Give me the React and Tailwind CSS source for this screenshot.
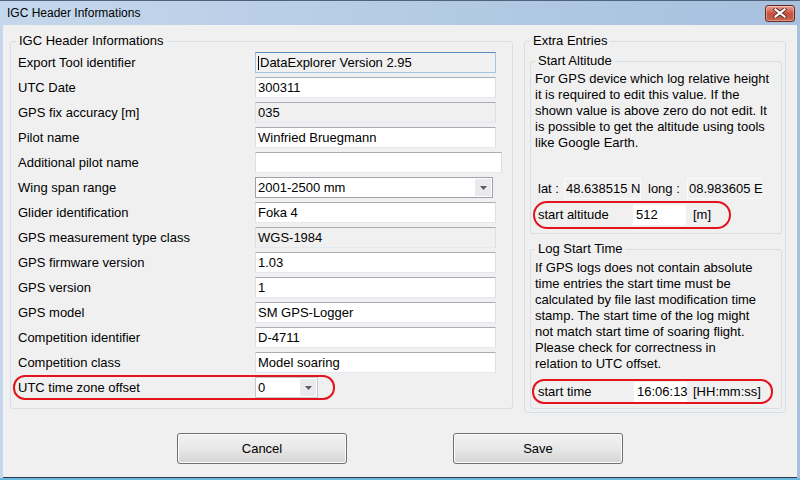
import React from 'react';

const rows = [
  { label: 'Export Tool identifier', value: 'DataExplorer Version 2.95', kind: 'focus' },
  { label: 'UTC Date', value: '300311' },
  { label: 'GPS fix accuracy [m]', value: '035', kind: 'readonly' },
  { label: 'Pilot name', value: 'Winfried Bruegmann' },
  { label: 'Additional pilot name', value: '', kind: 'wide' },
  { label: 'Wing span range', value: '2001-2500 mm', kind: 'combo' },
  { label: 'Glider identification', value: 'Foka 4' },
  { label: 'GPS measurement type class', value: 'WGS-1984', kind: 'readonly' },
  { label: 'GPS firmware version', value: '1.03' },
  { label: 'GPS version', value: '1' },
  { label: 'GPS model', value: 'SM GPS-Logger' },
  { label: 'Competition identifier', value: 'D-4711' },
  { label: 'Competition class', value: 'Model soaring' },
];

const altitudeText = [
  'For GPS device which log relative height',
  'it is required to edit this value. If the',
  'shown value is above zero do not edit. It',
  'is possible to get the altitude using tools',
  'like Google Earth.',
];

const startTimeText = [
  'If GPS logs does not contain absolute',
  'time entries the start time must be',
  'calculated by file last modification time',
  'stamp. The start time of the log might',
  'not match start time of soaring flight.',
  'Please check for correctness in',
  'relation to UTC offset.',
];

// windows 7 style text box
const TextField = ({ value, kind }) => {
  if (kind === 'focus') {
    return (
      <div className="flex h-[21px] w-[241px] items-center border border-[#a4c5e4] border-t-[#5d8cbd] bg-[#f0f0f0] pl-[2px]">
        <span className="h-[14px] w-px bg-black" />
        <span className="pl-px">{value}</span>
      </div>
    );
  }
  if (kind === 'readonly') {
    return (
      <div className="flex h-[21px] w-[241px] items-center border border-[#dbdfe6] border-t-[#abadb3] border-b-[#e3e9ef] bg-[#f0f0f0] pl-[2px]">
        {value}
      </div>
    );
  }
  if (kind === 'wide') {
    return (
      <div className="flex h-[21px] w-[247px] items-center border border-[#dbdfe6] border-t-[#abadb3] border-b-[#e3e9ef] bg-white pl-[2px]">
        {value}
      </div>
    );
  }
  return (
    <div className="flex h-[21px] w-[241px] items-center border border-[#dbdfe6] border-t-[#abadb3] border-b-[#e3e9ef] bg-white pl-[2px]">
      {value}
    </div>
  );
};

const ComboArrow = () => (
  <span className="flex h-[17px] w-[16px] items-center justify-center bg-[#e8eaed]">
    <svg width="7" height="4" viewBox="0 0 7 4">
      <path d="M0 0h7L3.5 4z" fill="#5a5a5a" />
    </svg>
  </span>
);

const Combo = ({ value, wide }) => (
  <div
    className={
      wide
        ? 'flex h-[21px] w-[238px] items-center border border-[#a0a4aa] bg-white pr-px'
        : 'flex h-[21px] w-[63px] items-center border border-[#c5c9ce] bg-white pr-px'
    }
  >
    <span className="flex-1 pl-[2px]">{value}</span>
    <ComboArrow />
  </div>
);

const Legend = ({ children, className = '' }) => (
  <legend className={`px-[3px] leading-[16px] ${className}`}>{children}</legend>
);

const CloseButton = () => (
  <div className="flex h-[17px] w-[30px] items-center justify-center rounded-[3px] border border-[#6b2a22] bg-gradient-to-b from-[#e6a493] via-[#c9503f] to-[#c4624f] shadow-[inset_0_0_0_1px_rgba(255,220,210,0.45)]">
    <svg width="14" height="10" viewBox="0 0 14 10">
      <path d="M2.5 1.5l9 7M11.5 1.5l-9 7" stroke="#5a2a22" strokeWidth="4" strokeLinecap="square" />
      <path d="M2.5 1.5l9 7M11.5 1.5l-9 7" stroke="#ffffff" strokeWidth="2.2" strokeLinecap="square" />
    </svg>
  </div>
);

const WinButton = ({ children }) => (
  <button
    type="button"
    className="h-[31px] w-[170px] rounded-[3px] border border-[#707070] bg-gradient-to-b from-[#f2f2f2] via-[#e8e8e8] to-[#d4d4d4] text-black shadow-[inset_0_0_0_1px_#fbfbfb]"
  >
    {children}
  </button>
);

export default function App() {
  return (
    <div className="flex h-[480px] w-[800px] flex-col overflow-hidden border-t border-[#4f6478] bg-gradient-to-r from-[#c4d7ec] to-[#a6c0de] font-['Liberation_Sans',Arial,sans-serif] text-[13px] text-black">
      {/* title bar */}
      <div className="flex h-[24px] items-center justify-between pl-[7px] pr-[5px]">
        <span className="text-[12px]">IGC Header Informations</span>
        <CloseButton />
      </div>

      <div className="mx-[3px] flex flex-1 flex-col border-b border-[#283848] bg-[#f0f0f0]">
        <div className="flex items-start gap-[11px] pl-[7px] pt-[8px]">
          {/* left group */}
          <fieldset className="w-[503px] rounded-[3px] border border-[#d5dfe5] pb-[10px] pl-[7px] pt-[3px]">
            <Legend className="-ml-[2px]">IGC Header Informations</Legend>
            <div className="flex flex-col gap-[4px]">
              {rows.map((row) => (
                <div key={row.label} className="flex h-[21px] items-center">
                  <span className="w-[237px]">{row.label}</span>
                  {row.kind === 'combo' ? (
                    <Combo value={row.value} wide />
                  ) : (
                    <TextField value={row.value} kind={row.kind} />
                  )}
                </div>
              ))}
              <div className="-my-[2px] -ml-[5px] flex h-[25px] w-[322px] items-center rounded-[12px] border-2 border-[#e3141c] pl-[3px]">
                <span className="w-[237px]">UTC time zone offset</span>
                <Combo value="0" />
              </div>
            </div>
          </fieldset>

          {/* right group */}
          <fieldset className="w-[262px] rounded-[3px] border border-[#d5dfe5] pb-[3px] pl-[5px] pr-[3px] pt-[4px]">
            <Legend>Extra Entries</Legend>

            <fieldset className="rounded-[3px] border border-[#d5dfe5] pb-[4px] pl-[4px] pt-[2px]">
              <Legend>Start Altitude</Legend>
              <p className="leading-[16px]">
                {altitudeText.map((line) => (
                  <span key={line} className="block">{line}</span>
                ))}
              </p>
              <div className="mt-[27px] flex h-[21px] items-center whitespace-nowrap">
                <span className="w-[29px] pl-[3px]">lat :</span>
                <div className="flex h-[21px] w-[77px] items-center border border-[#fbfbfb] bg-[#f0f0f0] pl-[1px]">
                  48.638515 N
                </div>
                <span className="w-[46px] pl-[7px]">long :</span>
                <div className="flex h-[21px] w-[75px] items-center border border-[#fbfbfb] bg-[#f0f0f0] pl-[1px]">
                  08.983605 E
                </div>
              </div>
              <div className="-ml-[2px] mt-[2px] flex h-[28px] w-[198px] items-center rounded-[14px] border-2 border-[#e3141c] pl-[3px]">
                <span className="w-[95px]">start altitude</span>
                <div className="flex h-[20px] w-[53px] items-center bg-white pl-[3px]">512</div>
                <span className="ml-[7px]">[m]</span>
              </div>
            </fieldset>

            <fieldset className="mt-[7px] rounded-[3px] border border-[#d5dfe5] pb-[4px] pl-[4px] pt-[3px]">
              <Legend>Log Start Time</Legend>
              <p className="leading-[16px]">
                {startTimeText.map((line) => (
                  <span key={line} className="block">{line}</span>
                ))}
              </p>
              <div className="-ml-[3px] mt-[7px] flex h-[25px] w-[241px] items-center rounded-[12px] border-2 border-[#e3141c] pl-[4px]">
                <span className="w-[96px]">start time</span>
                <div className="flex h-[20px] w-[53px] items-center bg-white pl-[3px]">16:06:13</div>
                <span className="ml-[6px]">[HH:mm:ss]</span>
              </div>
            </fieldset>
          </fieldset>
        </div>

        <div className="mt-[20px] flex justify-center gap-[106px]">
          <WinButton>Cancel</WinButton>
          <WinButton>Save</WinButton>
        </div>
      </div>
      <div className="h-[2px] bg-[#6ab8de]" />
    </div>
  );
}
